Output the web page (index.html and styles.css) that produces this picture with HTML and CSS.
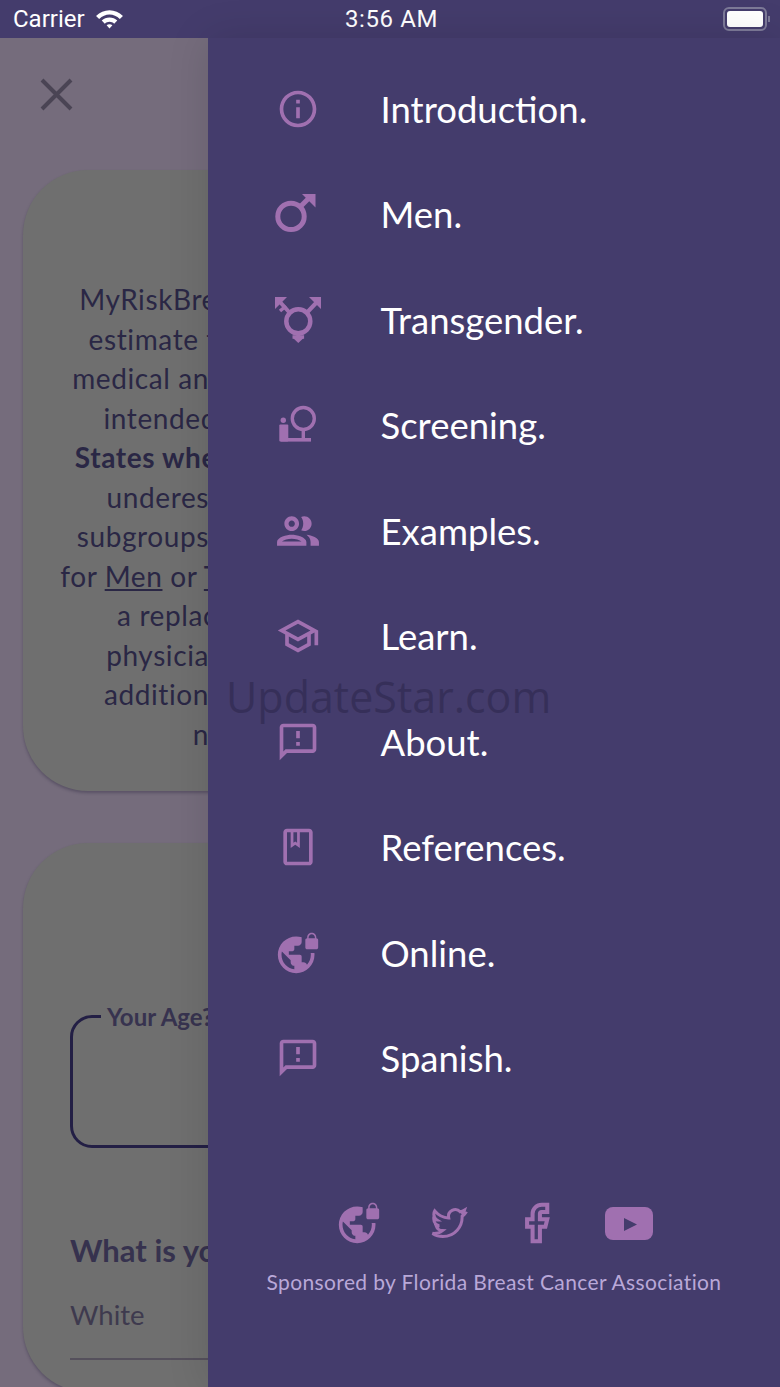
FILE: index.html
```html
<!DOCTYPE html>
<html lang="en">
<head>
    <meta charset="UTF-8">
    <meta name="viewport" content="width=device-width, initial-scale=1.0">
    <title>MyRiskBreast</title>
    <link rel="stylesheet" href="styles.css">
</head>
<body>
    <div class="screen">
        <header class="statusBar">
            <div class="statusLeft">
                <span>Carrier</span>
                <svg class="wifiIcon" viewBox="0 0 28 20"><path d="M14 2C9 2 4.800 4 1 7.500l3 3C7 7.700 10.300 6.200 14 6.200s7 1.500 10 4.300l3-3C23.200 4 19 2 14 2z"/><path d="M14 9c-2.900 0-5.500 1.100-7.500 3l3 3c1.200-1.100 2.800-1.800 4.500-1.800s3.300.7 4.500 1.800l3-3c-2-1.900-4.600-3-7.500-3z"/><path d="M14 15.500c-1.100 0-2 .4-2.800 1.100l2.800 3 2.800-3c-.8-.7-1.700-1.100-2.800-1.100z"/></svg>
            </div>
            <span class="statusTime">3:56 AM</span>
            <div class="statusRight">
                <div class="battery"><div class="batteryFill"></div></div>
                <div class="batteryCap"></div>
            </div>
        </header>

        <div class="content">
            <main class="behind">
                <svg class="closeIcon" viewBox="0 0 33 33"><path d="M2 2l29 29M31 2L2 31"/></svg>

                <section class="card introCard">
                    <p>MyRiskBr<span class="cutLetter">e</span><br>
                    estimate <span class="cutLetter">t</span><br>
                    medical an<br>
                    intende<span class="cutLetter">d</span><br>
                    <strong>States wh<span class="cutLetter">e</span></strong><br>
                    underes<br>
                    subgroups<br>
                    for <u>Men</u> or <u class="cutCapital">T</u><br>
                    a repla<span class="cutLetter">c</span><br>
                    physicia<br>
                    addition<br>
                    n</p>
                </section>

                <section class="card formCard">
                    <fieldset class="ageField">
                        <legend>Your Age?</legend>
                    </fieldset>
                    <h2>What is yo</h2>
                    <div class="selectRow">White</div>
                </section>
            </main>

            <aside class="drawer">
                <nav class="menu">
                    <a class="menuItem">
                        <svg class="menuIcon" viewBox="0 0 24 24"><path d="M11 7h2v2h-2zm0 4h2v6h-2zm1-9C6.480 2 2 6.480 2 12s4.480 10 10 10 10-4.480 10-10S17.520 2 12 2zm0 18c-4.410 0-8-3.590-8-8s3.590-8 8-8 8 3.590 8 8-3.590 8-8 8z"/></svg>
                        <span>Introduction.</span>
                    </a>
                    <a class="menuItem">
                        <svg class="menuIcon" viewBox="0 0 44 44"><circle class="line" cx="15" cy="24.400" r="13.200" stroke-width="5"/><path class="line" d="M24 15l11-11" stroke-width="5"/><path d="M26 2h13.500v13.500z"/></svg>
                        <span>Men.</span>
                    </a>
                    <a class="menuItem">
                        <svg class="menuIcon" viewBox="0 0 44 44"><circle class="line" cx="22.300" cy="23.300" r="12" stroke-width="4.500"/><path class="line" d="M13 14L4 4M31.500 14L41 4M22.300 35v6" stroke-width="4"/><path class="line" d="M4 13l6-5M16.500 39h11.600" stroke-width="3.500"/><path d="M-1-1h12L-1 11zM33-1h12v12zM17 40h10.600l-5.300 5z"/></svg>
                        <span>Transgender.</span>
                    </a>
                    <a class="menuItem">
                        <svg class="menuIcon" viewBox="0 0 44 44"><circle class="line" cx="27.300" cy="15.500" r="11" stroke-width="3.400"/><path class="line" d="M27.300 26v11" stroke-width="3.400"/><rect x="4.700" y="35" width="30.300" height="3.600"/><circle cx="7.300" cy="17.200" r="2.700"/><rect x="3.300" y="21.500" width="9" height="17" rx="1"/></svg>
                        <span>Screening.</span>
                    </a>
                    <a class="menuItem">
                        <svg class="menuIcon" viewBox="1.500 1.500 21 21"><path d="M9 13.750c-2.340 0-7 1.170-7 3.500V19h14v-1.750c0-2.330-4.660-3.500-7-3.500zM4.340 17c.84-.58 2.870-1.250 4.660-1.250s3.820.67 4.660 1.250H4.340zM9 12c1.930 0 3.500-1.570 3.500-3.500S10.930 5 9 5 5.500 6.570 5.500 8.500 7.070 12 9 12zm0-5c.83 0 1.500.67 1.500 1.500S9.830 10 9 10s-1.500-.67-1.500-1.500S8.170 7 9 7zm7.040 6.810c1.160.84 1.960 1.960 1.960 3.440V19h4v-1.750c0-2.020-3.500-3.170-5.960-3.440zM15 12c1.930 0 3.500-1.570 3.500-3.500S16.930 5 15 5c-.54 0-1.040.13-1.500.35.630.89 1 1.980 1 3.150s-.37 2.260-1 3.150c.46.22.96.35 1.500.35z"/></svg>
                        <span>Examples.</span>
                    </a>
                    <a class="menuItem">
                        <svg class="menuIcon" viewBox="0 0 24 24"><path d="M12 3L1 9l4 2.180v6L12 21l7-3.820v-6l2-1.090V17h2V9L12 3zm6.820 6L12 12.720 5.180 9 12 5.280 18.820 9zM17 15.990l-5 2.730-5-2.730v-3.720L12 15l5-2.730v3.720z"/></svg>
                        <span>Learn.</span>
                    </a>
                    <a class="menuItem">
                        <svg class="menuIcon" viewBox="0 0 24 24"><path d="M20 2H4c-1.100 0-1.990.9-1.990 2L2 22l4-4h14c1.100 0 2-.9 2-2V4c0-1.100-.9-2-2-2zm0 14H5.170L4 17.170V4h16v12zm-9-4h2v2h-2zm0-6h2v4h-2z"/></svg>
                        <span>About.</span>
                    </a>
                    <a class="menuItem">
                        <svg class="menuIcon" viewBox="0 0 24 24"><path d="M18 2H6c-1.100 0-2 .9-2 2v16c0 1.100.9 2 2 2h12c1.100 0 2-.9 2-2V4c0-1.100-.9-2-2-2zm0 18H6V4h2v8.500l2.500-1.700 2.500 1.700V4h5v16zM9.500 4h2v5.700l-1-.7-1 .7V4z"/></svg>
                        <span>References.</span>
                    </a>
                    <a class="menuItem">
                        <svg class="menuIcon" viewBox="0 0 24 24"><path d="M22 4v-.5C22 2.120 20.880 1 19.500 1S17 2.120 17 3.500V4c-.55 0-1 .45-1 1v4c0 .55.45 1 1 1h5c.55 0 1-.45 1-1V5c0-.55-.45-1-1-1zm-.8 0h-3.400v-.5c0-.94.76-1.700 1.700-1.700s1.700.76 1.700 1.700V4zm-2.280 8c.04.33.08.66.08 1 0 2.080-.8 3.970-2.100 5.390-.26-.81-1-1.390-1.900-1.390h-1v-3c0-.55-.45-1-1-1H7v-2h2c.55 0 1-.45 1-1V8h2c1.100 0 2-.9 2-2V3.460c-.95-.3-1.950-.46-3-.46C5.480 3 1 7.480 1 13s4.480 10 10 10 10-4.480 10-10c0-.34-.02-.67-.05-1h-2.030zM10 20.930c-3.950-.49-7-3.850-7-7.930 0-.62.08-1.210.21-1.790L8 16v1c0 1.100.9 2 2 2v1.930z"/></svg>
                        <span>Online.</span>
                    </a>
                    <a class="menuItem">
                        <svg class="menuIcon" viewBox="0 0 24 24"><path d="M20 2H4c-1.100 0-1.990.9-1.990 2L2 22l4-4h14c1.100 0 2-.9 2-2V4c0-1.100-.9-2-2-2zm0 14H5.170L4 17.170V4h16v12zm-9-4h2v2h-2zm0-6h2v4h-2z"/></svg>
                        <span>Spanish.</span>
                    </a>
                </nav>

                <div class="socialRow">
                    <svg class="socialIcon" viewBox="0 0 24 24"><path d="M22 4v-.5C22 2.120 20.880 1 19.500 1S17 2.120 17 3.500V4c-.55 0-1 .45-1 1v4c0 .55.45 1 1 1h5c.55 0 1-.45 1-1V5c0-.55-.45-1-1-1zm-.8 0h-3.400v-.5c0-.94.76-1.700 1.700-1.700s1.700.76 1.700 1.700V4zm-2.280 8c.04.33.08.66.08 1 0 2.080-.8 3.970-2.100 5.390-.26-.81-1-1.390-1.900-1.390h-1v-3c0-.55-.45-1-1-1H7v-2h2c.55 0 1-.45 1-1V8h2c1.100 0 2-.9 2-2V3.460c-.95-.3-1.950-.46-3-.46C5.480 3 1 7.480 1 13s4.480 10 10 10 10-4.480 10-10c0-.34-.02-.67-.05-1h-2.030zM10 20.930c-3.950-.49-7-3.850-7-7.930 0-.62.08-1.210.21-1.790L8 16v1c0 1.100.9 2 2 2v1.930z"/></svg>
                    <svg class="socialIcon outlineIcon" viewBox="-4 -4 32 32"><path d="M23.953 4.570a10 10 0 01-2.825.775 4.958 4.958 0 002.163-2.723c-.951.555-2.005.959-3.127 1.184a4.920 4.920 0 00-8.384 4.482C7.690 8.095 4.067 6.130 1.640 3.162a4.822 4.822 0 00-.666 2.475c0 1.710.87 3.213 2.188 4.096a4.904 4.904 0 01-2.228-.616v.06a4.923 4.923 0 003.946 4.827 4.996 4.996 0 01-2.212.085 4.936 4.936 0 004.604 3.417 9.867 9.867 0 01-6.102 2.105c-.39 0-.779-.023-1.170-.067a13.995 13.995 0 007.557 2.209c9.053 0 13.998-7.496 13.998-13.985 0-.21 0-.42-.015-.63A9.935 9.935 0 0024 4.590z"/></svg>
                    <svg class="socialIcon outlineIcon" viewBox="1.500 0 24 24"><path d="M18 2h-3a5 5 0 0 0-5 5v3H7v4h3v8h4v-8h3l1-4h-4V7a1 1 0 0 1 1-1h3z"/></svg>
                    <svg class="youtubeIcon" viewBox="0 0 48 33"><rect width="48" height="33" rx="8"/><path class="playMark" d="M19 11v13l13-6.500z"/></svg>
                </div>
                <p class="sponsor">Sponsored by Florida Breast Cancer Association</p>
            </aside>
        </div>

        <div class="watermark">UpdateStar.com</div>
    </div>
</body>
</html>
```

FILE: styles.css
```css
body {
    font-family: 'Lato', 'Noto Sans', sans-serif;
    margin: 0;
}

.screen {
    position: relative;
    width: 780px;
    height: 1387px;
    overflow: hidden;
    display: flex;
    flex-direction: column;
    background-color: #443c6c;
}

/* status bar */
.statusBar {
    height: 38px;
    flex-shrink: 0;
    display: grid;
    grid-template-columns: 1fr auto 1fr;
    align-items: center;
    padding: 0 10px 0 13px;
    color: #ffffff;
    font-family: 'Roboto', 'Liberation Sans', sans-serif;
    font-size: 24px;
}

.statusTime {
    letter-spacing: 0.6px;
}

.statusLeft {
    display: flex;
    align-items: center;
    gap: 10px;
}

.wifiIcon {
    width: 29px;
    height: 21px;
    fill: #ffffff;
    margin-top: -2px;
}

.statusRight {
    display: flex;
    align-items: center;
    justify-content: flex-end;
    gap: 1px;
}

.battery {
    width: 36px;
    height: 16px;
    padding: 2px;
    border: 2px solid #7d7a98;
    border-radius: 6px;
}

.batteryFill {
    height: 100%;
    background-color: #ffffff;
    border-radius: 3px;
}

.batteryCap {
    width: 2px;
    height: 6px;
    background-color: #7d7a98;
}

/* content sits behind the drawer */
.content {
    flex: 1;
    display: flex;
    min-height: 0;
}

.behind {
    width: 208px;
    flex-shrink: 0;
    overflow: hidden;
    background-color: #756c7c;
    padding: 40px 0 0 23px;
    box-sizing: border-box;
}

.closeIcon {
    display: block;
    width: 33px;
    height: 33px;
    margin-left: 17px;
    fill: none;
    stroke: #4a4454;
    stroke-width: 4;
}

.card {
    width: 734px;
    box-sizing: border-box;
    background-color: #6f6f6f;
    border-radius: 65px;
    box-shadow: 0 2px 3px rgba(40, 35, 60, 0.35);
    color: #2a2745;
}

.introCard {
    height: 621px;
    margin-top: 59px;
    padding-top: 110px;
    font-size: 28px;
    line-height: 39.5px;
    letter-spacing: 0.6px;
}

/* only the part left of the drawer is on screen */
.introCard p {
    width: 186px;
    margin: 0;
    text-align: right;
    white-space: nowrap;
}

.cutLetter {
    margin-right: -8px;
}

.cutCapital {
    margin-right: -12px;
}

.formCard {
    height: 549px;
    margin-top: 52px;
    padding: 159px 47px 0;
}

.ageField {
    height: 146px;
    margin: 0;
    padding: 0;
    box-sizing: border-box;
    border: 3px solid #231f45;
    border-radius: 22px;
}

.ageField legend {
    margin-left: 28px;
    padding: 0 6px;
    font-size: 24px;
    font-weight: bold;
    color: #37334f;
}

.formCard h2 {
    margin: 83px 0 0;
    font-size: 31px;
    color: #36324e;
}

.selectRow {
    margin-top: 29px;
    padding-bottom: 27px;
    border-bottom: 2px solid #55505c;
    font-size: 27.5px;
    color: #3e3a4e;
}

/* drawer */
.drawer {
    flex: 1;
    position: relative;
    background-color: #443c6c;
    box-shadow: 0 0 40px rgba(0, 0, 0, 0.12);
}

.menu {
    padding-top: 18px;
}

.menuItem {
    height: 105.5px;
    display: flex;
    align-items: center;
    gap: 60.5px;
    padding-left: 68px;
    color: #ffffff;
    font-size: 36.5px;
}

.menuIcon {
    width: 44px;
    height: 44px;
    flex-shrink: 0;
    fill: #a070b0;
    overflow: visible;
}

.menuItem:first-child .menuIcon {
    margin-top: 1px;
}

.menuIcon .line {
    fill: none;
    stroke: #a070b0;
}

.socialRow {
    display: flex;
    justify-content: center;
    align-items: center;
    margin-top: 90px;
}

.socialIcon {
    width: 44px;
    height: 44px;
    padding: 0 23px;
    fill: #a070b0;
}

.socialIcon.outlineIcon {
    fill: none;
    stroke: #a070b0;
    stroke-width: 2.200;
}

.youtubeIcon {
    width: 48px;
    height: 33px;
    margin: 0 21px;
    fill: #a070b0;
}

.playMark {
    fill: #443c6c;
}

.sponsor {
    margin: 24px 0 0;
    text-align: center;
    font-size: 21px;
    letter-spacing: 0.37px;
    color: #b9a8d8;
}

.watermark {
    position: absolute;
    left: 226px;
    top: 667px;
    font-family: 'Open Sans', sans-serif;
    font-size: 43px;
    color: rgba(40, 35, 70, 0.5);
}
```
